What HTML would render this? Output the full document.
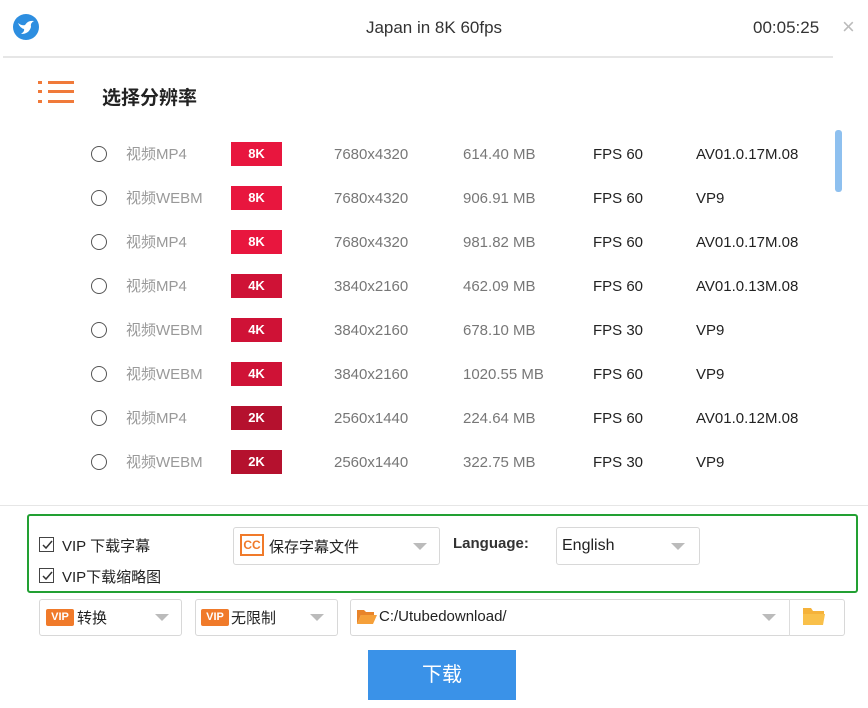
<!DOCTYPE html>
<html><head><meta charset="utf-8"><style>
*{margin:0;padding:0;box-sizing:border-box}
body{width:868px;height:708px;background:#fff;font-family:"Liberation Sans","Noto Sans CJK SC",sans-serif;position:relative;overflow:hidden;color:#222}
.a{position:absolute}
.row{position:absolute;left:0;width:840px;height:20px;font-size:15px}
.row span{position:absolute;top:1px;line-height:20px}
.rad{left:91px;top:2px!important;width:16px;height:16px;border:1.6px solid #555;border-radius:50%}
.badge{left:231px;width:51px;height:24px!important;top:-2px!important;color:#fff;font-weight:bold;font-size:13px;text-align:center;line-height:24px!important}
.g{color:#999}.d{color:#777}
.box{position:absolute;border:1px solid #d8d8d8;border-radius:3px;background:#fff}
.tri{position:absolute;width:0;height:0;border-left:7px solid transparent;border-right:7px solid transparent;border-top:7px solid #bbb}
.vip{position:absolute;background:#f07a2a;color:#fff;font-size:11px;font-weight:bold;border-radius:2px;width:28px;height:17px;line-height:17px;text-align:center}
.cb{position:absolute;width:15px;height:15px;border:1.4px solid #444}
</style></head><body>
<svg class="a" style="left:12px;top:13px" width="28" height="28" viewBox="0 0 28 28"><circle cx="14" cy="14" r="13" fill="#2d8ee0"/><path d="M6 10 Q10 13 13 12 Q16 7 22 8 Q18 10 19 14 Q17 21 9 21 Q13 18 12 16 Q8 15 6 10Z" fill="#fff"/></svg>
<div class="a" style="left:0;width:868px;top:18px;text-align:center;font-size:17px;color:#333">Japan in 8K 60fps</div>
<div class="a" style="left:753px;top:18px;font-size:17px;color:#333">00:05:25</div>
<div class="a" style="left:842px;top:14px;font-size:22px;color:#bbb">×</div>
<div class="a" style="left:3px;top:56px;width:830px;height:2px;background:#e6e6e6"></div>
<svg class="a" style="left:38px;top:80px" width="38" height="26"><g fill="#f07a3a"><rect x="0" y="1" width="4" height="3"/><rect x="0" y="10" width="4" height="3"/><rect x="0" y="20" width="4" height="3"/><rect x="10" y="1" width="26" height="3"/><rect x="10" y="10" width="26" height="3"/><rect x="10" y="20" width="26" height="3"/></g></svg>
<div class="a" style="left:102px;top:83px;font-size:19px;font-weight:bold;color:#222">选择分辨率</div>
<div class="a" style="left:835px;top:130px;width:7px;height:62px;background:#8ec0ef;border-radius:3px"></div>

<div class="row" style="top:144px"><span class="rad"></span><span class="g" style="left:126px">视频MP4</span><span class="badge" style="background:#e8163e">8K</span><span class="d" style="left:334px">7680x4320</span><span class="d" style="left:463px">614.40 MB</span><span style="left:593px">FPS 60</span><span style="left:696px">AV01.0.17M.08</span></div>
<div class="row" style="top:188px"><span class="rad"></span><span class="g" style="left:126px">视频WEBM</span><span class="badge" style="background:#e8163e">8K</span><span class="d" style="left:334px">7680x4320</span><span class="d" style="left:463px">906.91 MB</span><span style="left:593px">FPS 60</span><span style="left:696px">VP9</span></div>
<div class="row" style="top:232px"><span class="rad"></span><span class="g" style="left:126px">视频MP4</span><span class="badge" style="background:#e8163e">8K</span><span class="d" style="left:334px">7680x4320</span><span class="d" style="left:463px">981.82 MB</span><span style="left:593px">FPS 60</span><span style="left:696px">AV01.0.17M.08</span></div>
<div class="row" style="top:276px"><span class="rad"></span><span class="g" style="left:126px">视频MP4</span><span class="badge" style="background:#cf1236">4K</span><span class="d" style="left:334px">3840x2160</span><span class="d" style="left:463px">462.09 MB</span><span style="left:593px">FPS 60</span><span style="left:696px">AV01.0.13M.08</span></div>
<div class="row" style="top:320px"><span class="rad"></span><span class="g" style="left:126px">视频WEBM</span><span class="badge" style="background:#cf1236">4K</span><span class="d" style="left:334px">3840x2160</span><span class="d" style="left:463px">678.10 MB</span><span style="left:593px">FPS 30</span><span style="left:696px">VP9</span></div>
<div class="row" style="top:364px"><span class="rad"></span><span class="g" style="left:126px">视频WEBM</span><span class="badge" style="background:#cf1236">4K</span><span class="d" style="left:334px">3840x2160</span><span class="d" style="left:463px">1020.55 MB</span><span style="left:593px">FPS 60</span><span style="left:696px">VP9</span></div>
<div class="row" style="top:408px"><span class="rad"></span><span class="g" style="left:126px">视频MP4</span><span class="badge" style="background:#b5112e">2K</span><span class="d" style="left:334px">2560x1440</span><span class="d" style="left:463px">224.64 MB</span><span style="left:593px">FPS 60</span><span style="left:696px">AV01.0.12M.08</span></div>
<div class="row" style="top:452px"><span class="rad"></span><span class="g" style="left:126px">视频WEBM</span><span class="badge" style="background:#b5112e">2K</span><span class="d" style="left:334px">2560x1440</span><span class="d" style="left:463px">322.75 MB</span><span style="left:593px">FPS 30</span><span style="left:696px">VP9</span></div>

<div class="a" style="left:0;top:505px;width:868px;height:1px;background:#e6e6e6"></div>
<div class="a" style="left:27px;top:514px;width:831px;height:79px;border:2.5px solid #22a033;border-radius:3px"></div>
<div class="cb" style="left:39px;top:537px"></div><svg class="a" style="left:41px;top:539px" width="12" height="12"><path d="M2 6l3 3 6-7" stroke="#333" stroke-width="1.5" fill="none"/></svg>
<div class="a" style="left:62px;top:535px;font-size:15px">VIP 下载字幕</div>
<div class="cb" style="left:39px;top:568px"></div><svg class="a" style="left:41px;top:570px" width="12" height="12"><path d="M2 6l3 3 6-7" stroke="#333" stroke-width="1.5" fill="none"/></svg>
<div class="a" style="left:62px;top:566px;font-size:15px">VIP下载缩略图</div>
<div class="box" style="left:233px;top:527px;width:207px;height:38px"></div>
<div class="a" style="left:240px;top:534px;width:24px;height:22px;border:2px solid #f07a2a;color:#f07a2a;font-size:12px;font-weight:bold;text-align:center;line-height:18px">CC</div>
<div class="a" style="left:269px;top:536px;font-size:15px">保存字幕文件</div>
<div class="tri" style="left:413px;top:543px"></div>
<div class="a" style="left:453px;top:535px;font-size:15px;font-weight:bold;color:#333">Language:</div>
<div class="box" style="left:556px;top:527px;width:144px;height:38px"></div>
<div class="a" style="left:562px;top:537px;font-size:16px">English</div>
<div class="tri" style="left:671px;top:543px"></div>

<div class="box" style="left:39px;top:599px;width:143px;height:37px"></div>
<div class="vip" style="left:46px;top:609px">VIP</div><div class="a" style="left:77px;top:607px;font-size:15px">转换</div><div class="tri" style="left:155px;top:614px"></div>
<div class="box" style="left:195px;top:599px;width:143px;height:37px"></div>
<div class="vip" style="left:201px;top:609px">VIP</div><div class="a" style="left:231px;top:607px;font-size:15px">无限制</div><div class="tri" style="left:310px;top:614px"></div>
<div class="box" style="left:350px;top:599px;width:495px;height:37px"></div>
<div class="a" style="left:789px;top:599px;width:1px;height:37px;background:#ddd"></div>
<svg class="a" style="left:357px;top:608px" width="20" height="17"><path d="M0 2h7l2 2h8v3H4L0 16Z" fill="#e8842a"/><path d="M4 7h16l-4 9H0Z" fill="#f5a03a"/></svg>
<div class="a" style="left:379px;top:608px;font-size:15px">C:/Utubedownload/</div>
<div class="tri" style="left:762px;top:614px"></div>
<svg class="a" style="left:802px;top:606px" width="24" height="20"><path d="M1 2h8l2 3h11v4H1Z" fill="#f5b23a"/><path d="M1 8h22l-2 11H1Z" fill="#f9c04a"/></svg>
<div class="a" style="left:368px;top:650px;width:148px;height:50px;background:#3a92e8;color:#fff;font-size:20px;text-align:center;line-height:50px">下载</div>
</body></html>
